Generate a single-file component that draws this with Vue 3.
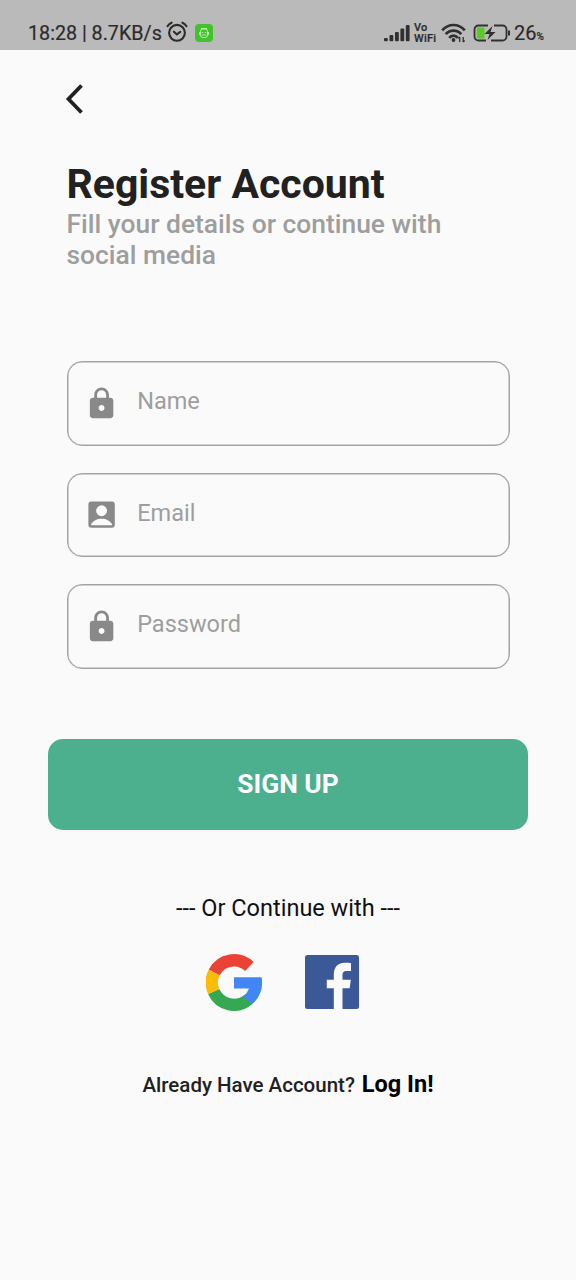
<script setup>
const fields = [
  { label: 'Name', icon: 'lock', type: 'text' },
  { label: 'Email', icon: 'account', type: 'email' },
  { label: 'Password', icon: 'lock', type: 'password' },
]
const paths = {
  lock: 'M18 8h-1V6c0-2.76-2.24-5-5-5S7 3.24 7 6v2H6c-1.1 0-2 .9-2 2v10c0 1.1.9 2 2 2h12c1.1 0 2-.9 2-2V10c0-1.1-.9-2-2-2zm-6 9c-1.1 0-2-.9-2-2s.9-2 2-2 2 .9 2 2-.9 2-2 2zm3.1-9H8.9V6c0-1.71 1.39-3.1 3.1-3.1 1.71 0 3.1 1.39 3.1 3.1v2z',
  account: 'M19 3H5a2 2 0 0 0-2 2v14a2 2 0 0 0 2 2h14a2 2 0 0 0 2-2V5a2 2 0 0 0-2-2zM12 5.700a3.700 3.700 0 1 1 0 7.400a3.700 3.700 0 1 1 0-7.400zM19.200 19.200H4.800v-.5C6.200 16.200 9 14.900 12 14.900s5.800 1.300 7.200 3.800z',
}
</script>

<template>
  <div class="screen">
    <header class="status">
      <div class="status-left">
        <span class="clock">18:28 | 8.7KB/s</span>
        <svg class="alarm" viewBox="0 0 22 22" fill="none" stroke="#2b2b2b" stroke-width="2.100" stroke-linecap="round">
          <circle cx="11" cy="11.800" r="7.900" />
          <path d="M1.500 5.200Q2.800 3 5.600 1.700M20.500 5.200Q19.200 3 16.400 1.700M7.900 10.700 10.800 13.400 14.300 10.800" />
        </svg>
        <svg class="app-badge" viewBox="0 0 18 18">
          <rect width="18" height="18" rx="4" fill="#43c22e" />
          <g fill="none" stroke="#b4efa8" stroke-width="1">
            <rect x="5.500" y="5" width="7" height="8.500" rx="2.500" />
            <path d="M6 4.500h6M4.500 8v3M13.500 8v3M6.800 8.500h1.500M9.800 8.500h1.500M7 11h4" />
          </g>
        </svg>
      </div>
      <div class="status-right">
        <svg class="signal" viewBox="0 0 26 18" fill="#303030">
          <rect x="0" y="14" width="3.800" height="3.200" rx="1" />
          <rect x="5.500" y="11" width="3.800" height="6.200" rx="1" />
          <rect x="11" y="8" width="3.800" height="9.200" rx="1" />
          <rect x="16.400" y="4.500" width="3.800" height="12.700" rx="1" />
          <rect x="21.800" y="1" width="3.800" height="16.200" rx="1" />
        </svg>
        <span class="vowifi"><span>Vo</span><span>WiFi</span></span>
        <svg class="wifi" viewBox="0 0 26 20" fill="none" stroke="#303030" stroke-width="2.700">
          <path d="M1.200 7.300C7.500.2 17.500.2 23.800 7.300M4.700 11.200C9 6.300 16 6.300 20.300 11.200M8.200 14.800C10.500 11.900 14.500 11.900 16.800 14.800" />
          <circle cx="12.500" cy="17" r="1.900" fill="#303030" stroke="none" />
          <path d="M18.700 19v-5M22.200 14v5M17.300 15.500l1.400-1.500M23.600 17.500l-1.400 1.500" stroke-width="1.300" />
        </svg>
        <svg class="battery" viewBox="0 0 38 18">
          <path d="M3.800 3.500H11.500v11H3.800z" fill="#58ca22" />
          <path d="M15 1.500H5.500a4 4 0 0 0-4 4v7a4 4 0 0 0 4 4H13M21 1.500h8.500a4 4 0 0 1 4 4v7a4 4 0 0 1-4 4H18" fill="none" stroke="#303030" stroke-width="1.800" />
          <path d="M19.500 2 11.500 10h5L14.500 16 22.500 8h-5z" fill="#303030" />
          <path d="M36 6.500v5" stroke="#303030" stroke-width="2" />
        </svg>
        <span class="percent">26<small>%</small></span>
      </div>
    </header>

    <main>
      <button class="back" aria-label="Back">
        <svg viewBox="0 0 20 32" fill="none" stroke="#212121" stroke-width="3.800"><path d="M17.500 2.500 4.500 16 17.500 29.500" /></svg>
      </button>
      <h1>Register Account</h1>
      <p class="sub">Fill your details or continue with social media</p>

      <form class="fields">
        <label v-for="f in fields" :key="f.label" class="field">
          <svg viewBox="0 0 24 24"><path fill="#898989" fill-rule="evenodd" :d="paths[f.icon]" /></svg>
          <input :type="f.type" :placeholder="f.label" />
        </label>
      </form>

      <button class="signup"><span>SIGN UP</span></button>

      <p class="or"><span>--- Or Continue with ---</span></p>
      <div class="social">
        <svg class="google" viewBox="0 0 56 57" fill="none" stroke-width="12.300">
          <path stroke="#34a853" d="M7.700 37.500A22.200 22.200 0 0 0 42.500 45.400" />
          <path stroke="#fbbc05" d="M8.200 18.400A22.200 22.200 0 0 0 7.700 37.500" />
          <path stroke="#ea4335" d="M43.400 12.500A22.200 22.200 0 0 0 8.200 18.400" />
          <path fill="#4285f4" d="M28 23.200H55.600A28.300 28.300 0 0 1 46.300 50.100L37 42.500A16 16 0 0 0 43 34.500H28z" />
        </svg>
        <svg class="facebook" viewBox="0 0 54 54">
          <rect width="54" height="54" rx="2.500" fill="#3b5998" />
          <path fill="#fafafa" d="M28.800 54V33.300h-7v-8.500h7v-5.500C28.800 12 33 7.700 40 7.700c2.500 0 5 .2 6 .4v8h-4.200c-3.400 0-4.300 1.700-4.300 4v4.700h8.300l-1.100 8.500h-7.200V54z" />
        </svg>
      </div>
      <p class="login"><span class="already">Already Have Account?</span><a>Log In!</a></p>
    </main>
  </div>
</template>

<style>
body { background: #fafafa; }
</style>

<style scoped>
.screen { width: 576px; height: 1280px; background: #fafafa; font-family: Roboto, sans-serif; overflow: hidden; }
svg { display: block; flex: none; }
button { border: 0; padding: 0; background: none; font: inherit; }
.status { box-sizing: border-box; height: 50px; padding: 17px 31px 0 28px; background: #bababa; display: flex; justify-content: space-between; color: #2b2b2b; }
.status-left, .status-right { display: flex; align-items: center; height: 32px; }
.clock { font-size: 19.700px; width: 138px; white-space: nowrap; -webkit-text-stroke: 0.2px #2b2b2b; }
.alarm { width: 22px; height: 22px; margin-top: -2px; }
.app-badge { width: 18px; height: 18px; margin-left: 7px; margin-top: -1px; }
.signal { width: 26px; height: 18px; }
.vowifi { width: 25px; margin-left: 4px; display: flex; flex-direction: column; font-size: 11px; line-height: 11px; font-weight: 500; letter-spacing: 0.2px; white-space: nowrap; -webkit-text-stroke: 0.2px #2b2b2b; }
.vowifi span { height: 11px; }
.wifi { width: 26px; height: 20px; margin-left: 2px; }
.battery { width: 38px; height: 18px; margin-left: 6px; margin-top: -1px; }
.percent { font-size: 20px; margin-left: 3px; white-space: nowrap; width: 31px; -webkit-text-stroke: 0.2px #2b2b2b; }
.percent small { font-size: 10px; font-weight: 500; }
main { display: flex; flex-direction: column; }
.back { width: 20px; height: 32px; margin: 33px 0 0 64px; }
.back svg { width: 20px; height: 32px; }
h1 { margin: 45px 0 0 66.500px; font-size: 41px; line-height: 48px; font-weight: 700; color: #212121; white-space: nowrap; }
.sub { margin: 1px 0 0 66.500px; width: 400px; font-size: 26.400px; line-height: 30.500px; font-weight: 500; color: #9e9e9e; }
.fields { margin: 91px 66.500px 0; display: flex; flex-direction: column; gap: 27px; }
.field { box-sizing: border-box; height: 84.700px; border: 1px solid #a3a3a3; box-shadow: inset 0 0 0 0.500px #a3a3a3; border-radius: 15px; display: flex; align-items: center; padding-left: 16.300px; }
.field svg { width: 35.200px; height: 35.200px; }
.field input { border: 0; outline: 0; background: none; padding: 0; margin: 0 0 5px 18.200px; height: 30px; width: 340px; font: 400 23.500px Roboto, sans-serif; color: #333; }
.field input::placeholder { color: #9e9e9e; opacity: 1; }
.signup { margin: 69.500px 48px 0; height: 91px; border-radius: 15px; background: #4caf8e; color: #fff; font-size: 26.400px; font-weight: 700; }
.or { margin: 64px 0 0; font-size: 23.500px; line-height: 28px; text-align: center; color: #101010; }
.social { margin-top: 32.400px; padding-left: 206px; display: flex; align-items: center; gap: 43px; }
.google { width: 56px; height: 57px; }
.facebook { width: 54px; height: 54px; }
.login { margin: 58.600px 0 0; display: flex; justify-content: center; align-items: baseline; gap: 7px; line-height: 28px; white-space: nowrap; }
.already { font-size: 20.500px; font-weight: 500; color: #212121; }
.login a { font-size: 23.500px; font-weight: 700; color: #000; }
</style>
